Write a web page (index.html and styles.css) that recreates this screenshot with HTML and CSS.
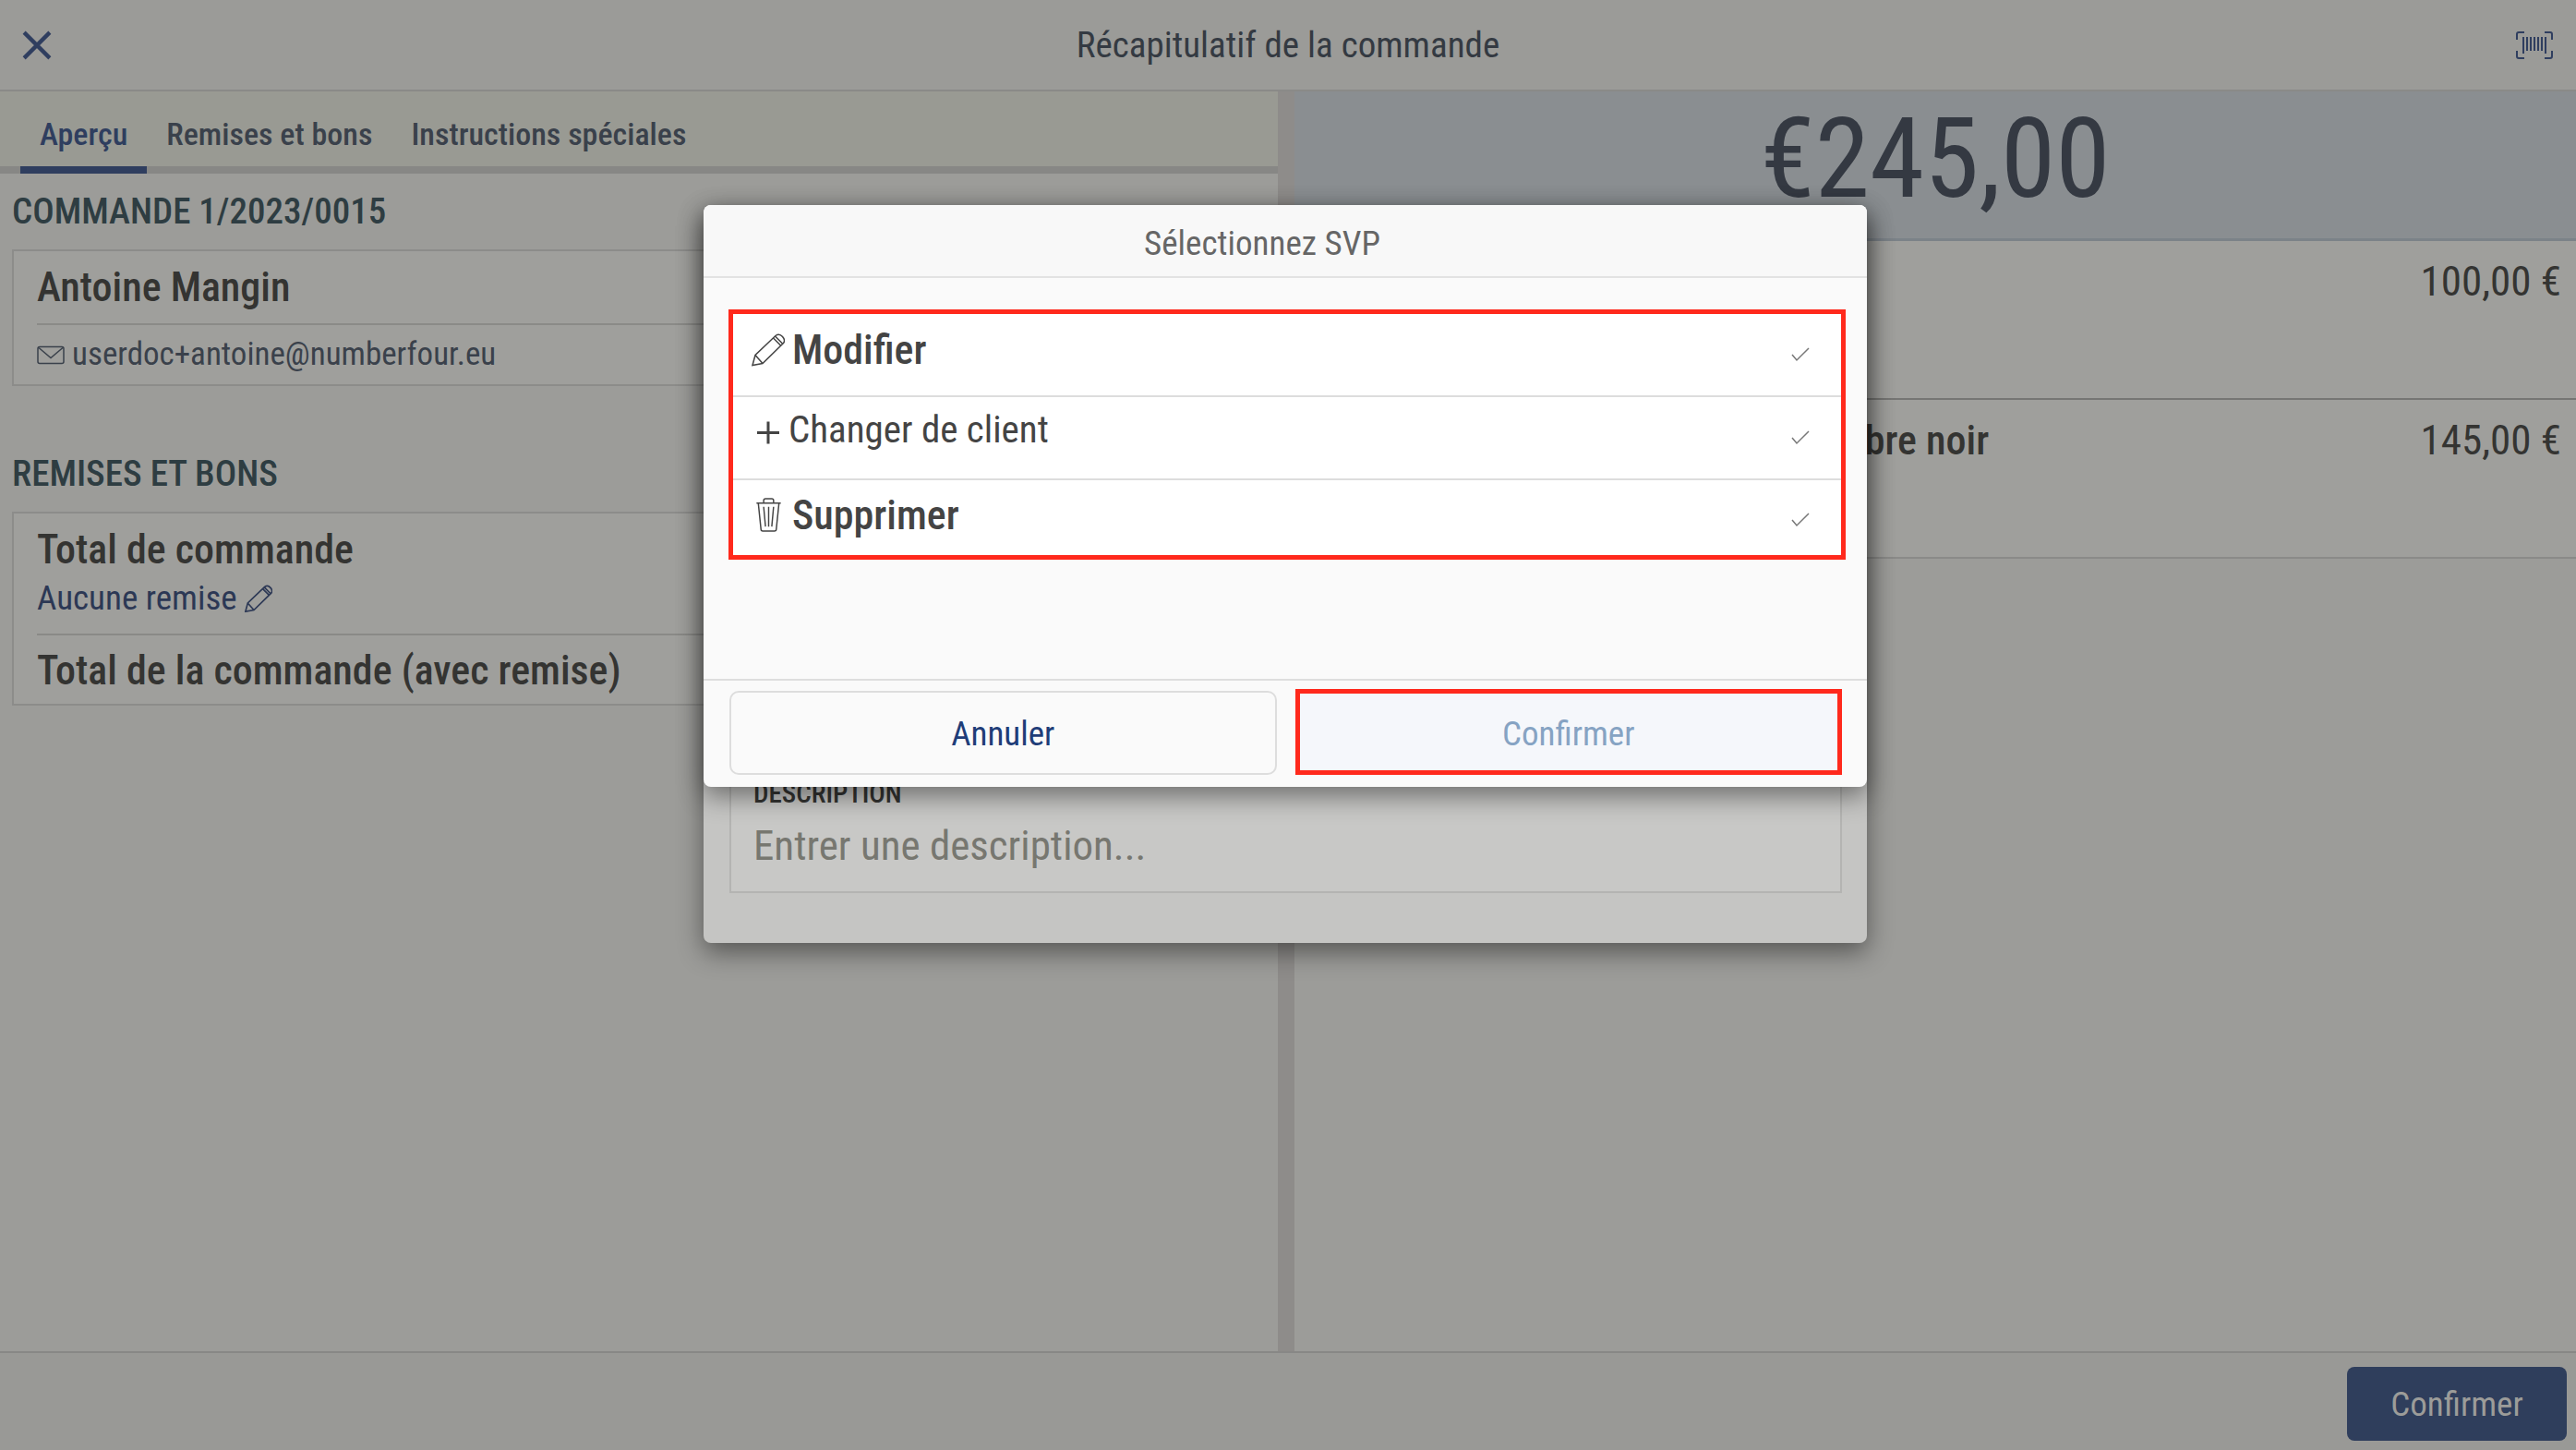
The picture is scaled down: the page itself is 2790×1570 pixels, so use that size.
FILE: index.html
```html
<!DOCTYPE html>
<html lang="fr">
<head>
<meta charset="utf-8">
<meta name="viewport" content="width=device-width, initial-scale=1">
<title>Récapitulatif de la commande</title>
<link rel="stylesheet" href="styles.css">
</head>
<body>
<svg class="defs" aria-hidden="true">
  <symbol id="pencil" viewBox="0 0 36 36"><path d="M1 35l3-11L26 3q4-3 7.500 1t1 7L12 33zM4 24l8 9M23.500 5.500l8.500 8.500M25.500 3.500l8.500 8.500"/></symbol>
  <symbol id="check" viewBox="0 0 20 16"><path d="M1 8l5 6L19 1"/></symbol>
</svg>

<header class="topbar">
  <button class="icon-button" aria-label="Fermer"><svg class="close" viewBox="0 0 30 30"><path d="M2 2l26 26M28 2L2 28"/></svg></button>
  <h1 class="topbar-title">Récapitulatif de la commande</h1>
  <button class="icon-button" aria-label="Scanner"><svg class="scan" viewBox="0 0 42 32"><path d="M2 10V4q0-2 2-2h6M32 2h6q2 0 2 2v6M40 22v6q0 2-2 2h-6M10 30H4q-2 0-2-2v-6M9 7v18M13 7v15M17 7v15M21 7v15M25 7v15M29 7v15M33 7v18"/></svg></button>
</header>

<main class="columns">
  <section class="overview">
    <div class="tabs" role="tablist">
      <button class="tab tab-active" role="tab" aria-selected="true">Aperçu</button>
      <button class="tab" role="tab" aria-selected="false">Remises et bons</button>
      <button class="tab" role="tab" aria-selected="false">Instructions spéciales</button>
    </div>
    <div class="panels">
      <h2 class="section-title">COMMANDE 1/2023/0015</h2>
      <div class="card">
        <div class="card-row card-name"><strong class="strong">Antoine Mangin</strong></div>
        <div class="card-row card-mail">
          <svg class="mail" viewBox="0 0 30 20"><rect x="1" y="1" width="28" height="18" rx="2"/><path d="M2 2l13 11L28 2"/></svg>
          <a class="mail-link" href="mailto:userdoc+antoine@numberfour.eu">userdoc+antoine@numberfour.eu</a>
        </div>
      </div>
      <h2 class="section-title">REMISES ET BONS</h2>
      <div class="card">
        <div class="card-row card-total">
          <strong class="strong">Total de commande</strong>
          <button class="discount">Aucune remise <svg class="pencil-small"><use href="#pencil"/></svg></button>
        </div>
        <div class="card-row card-sum"><strong class="strong">Total de la commande (avec remise)</strong></div>
      </div>
    </div>
  </section>

  <section class="basket">
    <p class="amount">€245,00</p>
    <ul class="items">
      <li class="item"><strong class="strong item-name">Article</strong><span class="price">100,00 €</span></li>
      <li class="item"><strong class="strong item-name">Plateau marbre noir</strong><span class="price">145,00 €</span></li>
    </ul>
  </section>
</main>

<footer class="bottombar">
  <button class="submit">Confirmer</button>
</footer>

<div class="overlay">
  <form class="dialog dialog-back">
    <div class="field">
      <label class="field-label" for="description">DESCRIPTION</label>
      <input class="field-input" id="description" type="text" placeholder="Entrer une description...">
    </div>
  </form>
  <div class="dialog dialog-front" role="dialog" aria-labelledby="dialog-title">
    <h2 class="dialog-title" id="dialog-title">Sélectionnez SVP</h2>
    <div class="dialog-body">
      <div class="options">
        <button class="option"><svg class="option-icon"><use href="#pencil"/></svg><span class="option-text strong">Modifier</span><svg class="check"><use href="#check"/></svg></button>
        <button class="option option-plain"><svg class="option-icon plus" viewBox="0 0 36 36"><path d="M20 6v24M8 18h24"/></svg><span class="option-text">Changer de client</span><svg class="check"><use href="#check"/></svg></button>
        <button class="option"><svg class="option-icon" viewBox="0 0 36 38"><path d="M5 6h27M13 6V3q0-2 2-2h7q2 0 2 2v3M7 6l3 29q0 2 2 2h13q2 0 2-2l3-29M13 10l2 22M18.500 10v22M24 10l-2 22"/></svg><span class="option-text strong">Supprimer</span><svg class="check"><use href="#check"/></svg></button>
      </div>
    </div>
    <div class="dialog-actions">
      <button class="cancel">Annuler</button>
      <button class="confirm">Confirmer</button>
    </div>
  </div>
</div>
</body>
</html>
```
FILE: styles.css
```css
* { box-sizing: border-box; }

body {
  position: relative;
  display: flex;
  flex-direction: column;
  min-height: 100vh;
  margin: 0;
  background: #9c9c99;
  color: #343432;
  font: 400 37px/44px "Roboto Condensed", Roboto, sans-serif;
}

h1, h2, p, ul { margin: 0; padding: 0; font-weight: 400; }
ul { list-style: none; }
button, input { margin: 0; padding: 0; border: 0; background: none; color: inherit; font: inherit; }
svg { flex: none; fill: none; stroke: currentColor; stroke-width: 1.5; }
.defs { position: absolute; width: 0; height: 0; }
.strong { font-size: 44px; font-weight: 500; }

/* Top bar */
.topbar {
  display: flex;
  align-items: center;
  justify-content: space-between;
  height: 99px;
  padding: 0 24px;
  border-bottom: 2px solid #8a8a88;
  background: #9b9b98;
}
.topbar-title { color: #343a42; font-size: 39px; }
.icon-button { display: flex; width: 42px; color: #2f3e5f; }
.close { width: 32px; height: 32px; stroke-width: 4; }
.scan { width: 42px; height: 32px; stroke-width: 2; }

/* Columns */
.columns {
  display: grid;
  flex: 1;
  grid-template-columns: minmax(0, 1fr) minmax(0, 1fr);
}
.overview { border-right: 18px solid #8e8c8a; margin-right: -7px; }
.basket { margin-left: 7px; }

.tabs {
  display: flex;
  height: 89px;
  padding: 0 22px;
  border-bottom: 8px solid #878785;
  background: #999a93;
}
.tab {
  height: 89px;
  padding: 10px 21px 0;
  border-bottom: 8px solid transparent;
  color: #3a414b;
  font-size: 34px;
  font-weight: 500;
}
.tab-active { border-color: #2f3e5f; color: #2f3e5f; }

.panels { padding-left: 13px; }
.section-title {
  padding: 19px 0 19px;
  color: #2e3d42;
  font-size: 39px;
  font-weight: 500;
}
.card {
  margin-bottom: 54px;
  padding-left: 25px;
  border: 2px solid #8c8c8a;
  background: #9f9f9c;
}
.card-row + .card-row { border-top: 2px solid #8a8a87; }
.card-name { padding: 17px 0; }
.card-mail { display: flex; align-items: center; gap: 8px; height: 66px; color: #3a414b; }
.card-name .strong { display: block; }
.mail { width: 30px; height: 21px; }
.mail-link { color: inherit; font-size: 35px; text-decoration: none; }
.card-total { display: flex; flex-direction: column; align-items: flex-start; gap: 9px; padding: 17px 0 16px; }
.discount { display: flex; align-items: center; gap: 8px; color: #2c3855; }
.pencil-small { width: 30px; height: 30px; stroke-width: 2; }
.card-sum { padding: 16px 0 14px; }
.card-sum .strong { display: block; }

/* Basket */
.amount {
  height: 162px;
  padding-top: 13px;
  border-bottom: 3px solid #7b8288;
  background: #8a8e91;
  color: #343942;
  font-size: 120px;
  line-height: 120px;
  text-align: center;
}
.items { background: #9f9f9c; }
.item {
  display: flex;
  justify-content: space-between;
  height: 172px;
  padding: 22px 16px 0 407px;
  border-bottom: 2px solid #767674;
}
.item:last-child { border-color: #8a8a88; }
.price { font-size: 45px; }

/* Bottom bar */
.bottombar {
  display: flex;
  justify-content: flex-end;
  padding: 15px 10px 10px;
  border-top: 2px solid #888886;
  background: #999996;
}
.submit {
  width: 238px;
  height: 80px;
  padding-top: 2px;
  border-radius: 8px;
  background: #2f3e5c;
  color: #9c9c99;
}

/* Dialogs */
.overlay {
  position: absolute;
  inset: 0;
  display: grid;
  grid-template-columns: minmax(0, 1260px);
  align-content: start;
  justify-content: center;
  padding: 222px 6px 0 0;
}
.dialog {
  grid-area: 1 / 1;
  border-radius: 8px;
  box-shadow: 0 10px 28px rgba(0, 0, 0, 0.45);
}
.dialog-back { padding: 500px 27px 54px 28px; background: #c5c5c3; }
.field {
  display: flex;
  flex-direction: column;
  padding: 117px 24px 17px;
  border: 2px solid #b4b4b2;
  background: #c8c8c6;
}
.field-label { font-size: 29px; font-weight: 500; line-height: 36px; }
.field-input { height: 66px; margin-top: 5px; font-size: 45px; }
.field-input::placeholder { color: #777770; opacity: 1; }

.dialog-front { align-self: start; background: #fafafa; }
.dialog-title {
  height: 79px;
  padding: 20px 50px 0 0;
  border-bottom: 2px solid #e2e2e2;
  border-radius: 8px 8px 0 0;
  background: #f8f8f8;
  color: #666;
  font-size: 37px;
  text-align: center;
}
.dialog-body { padding: 34px 23px 129px 27px; }
.options { border: 5px solid #ff291c; background: #fff; }
.option {
  display: flex;
  align-items: center;
  gap: 8px;
  width: 100%;
  height: 90px;
  padding: 0 34px 0 20px;
  border-bottom: 2px solid #ddd;
  color: #444;
}
.option:last-child { height: 81px; padding-top: 5px; border-bottom: 0; }
.option-icon { width: 36px; height: 37px; margin-bottom: 11px; }
.plus { stroke-width: 3; }
.option-text { flex: 1; margin-bottom: 11px; text-align: left; font-size: 41px; }
.option-text.strong { font-size: 44px; }
.option-plain { gap: 6px; padding-left: 18px; }
.option-plain .option-text { margin-bottom: 18px; }
.check { width: 20px; height: 16px; color: #777; }

.dialog-actions {
  display: grid;
  grid-template-columns: 1fr 1fr;
  align-items: end;
  gap: 20px;
  padding: 9px 27px 13px 28px;
  border-top: 2px solid #dedede;
}
.cancel { height: 91px; padding-top: 2px; border: 2px solid #ddd; border-radius: 10px; color: #1f3d78; }
.confirm { height: 93px; padding-top: 4px; border: 5px solid #ff291c; background: #f5f7fb; color: #86a3c3; }
```
